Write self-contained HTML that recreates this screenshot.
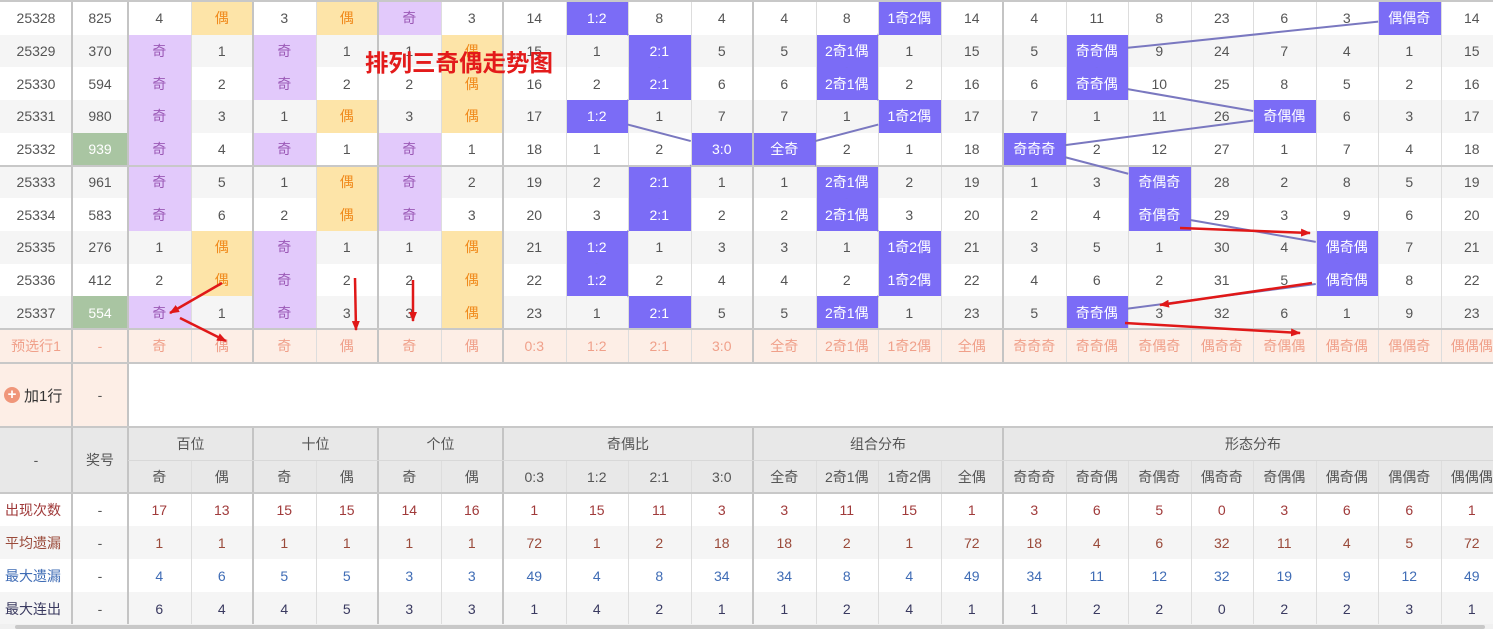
<!DOCTYPE html>
<html><head><meta charset="utf-8">
<style>
body{margin:0;width:1493px;height:629px;overflow:hidden;background:#fff;font-family:"Liberation Sans","Noto Sans CJK SC",sans-serif;font-size:14px;color:#555;position:relative}
.c{position:absolute;display:flex;align-items:center;justify-content:center;box-sizing:border-box;white-space:nowrap}
.v{position:absolute;top:0;width:1px;background:#ddd}
.vt{width:2px;background:#c4c4c4}
.h{position:absolute;left:0;width:1493px;height:2px;background:#c8c8c8}
svg{position:absolute;left:0;top:0}
</style></head><body>
<div id="root"></div>
<script>
var R=document.getElementById('root');
function el(x,y,w,h,txt,st){var d=document.createElement('div');d.className='c';d.style.cssText='left:'+x+'px;top:'+y+'px;width:'+w+'px;height:'+h+'px;'+(st||'');d.textContent=txt;R.appendChild(d);return d;}
var X=[0,72,128];for(var k=1;k<=23;k++)X.push(128+62.5*k);
function cx(i){return (X[i]+X[i+1])/2}
var RH=32.7,Y0=2;
var rows=[
['25328','825','4','偶','3','偶','奇','3','14','#1:2','8','4','4','8','#1奇2偶','14','4','11','8','23','6','3','#偶偶奇','14'],
['25329','370','奇','1','奇','1','1','偶','15','1','#2:1','5','5','#2奇1偶','1','15','5','#奇奇偶','9','24','7','4','1','15'],
['25330','594','奇','2','奇','2','2','偶','16','2','#2:1','6','6','#2奇1偶','2','16','6','#奇奇偶','10','25','8','5','2','16'],
['25331','980','奇','3','1','偶','3','偶','17','#1:2','1','7','7','1','#1奇2偶','17','7','1','11','26','#奇偶偶','6','3','17'],
['25332','*939','奇','4','奇','1','奇','1','18','1','2','#3:0','#全奇','2','1','18','#奇奇奇','2','12','27','1','7','4','18'],
['25333','961','奇','5','1','偶','奇','2','19','2','#2:1','1','1','#2奇1偶','2','19','1','3','#奇偶奇','28','2','8','5','19'],
['25334','583','奇','6','2','偶','奇','3','20','3','#2:1','2','2','#2奇1偶','3','20','2','4','#奇偶奇','29','3','9','6','20'],
['25335','276','1','偶','奇','1','1','偶','21','#1:2','1','3','3','1','#1奇2偶','21','3','5','1','30','4','#偶奇偶','7','21'],
['25336','412','2','偶','奇','2','2','偶','22','#1:2','2','4','4','2','#1奇2偶','22','4','6','2','31','5','#偶奇偶','8','22'],
['25337','*554','奇','1','奇','3','3','偶','23','1','#2:1','5','5','#2奇1偶','1','23','5','#奇奇偶','3','32','6','1','9','23']];
var boxes=[[],[],[]];
rows.forEach(function(r,i){
 var y=Y0+RH*i;var bg=i%2?'#f5f5f5':'#fff';
 el(0,y,1493,RH,'','background:'+bg);
 r.forEach(function(t,j){
  var x=X[j],w=X[j+1]-X[j],st='';
  if(t[0]=='#'){t=t.slice(1);st='background:#7b6cf6;color:#fff;';var g=j<12?0:(j<16?1:2);boxes[g].push([cx(j),y+RH/2]);}
  else if(t[0]=='*'){t=t.slice(1);st='background:#a9c5a2;color:#fff;';}
  else if(j>=2&&j<8&&t=='奇')st='background:#e2c9fb;color:#9b59b6;';
  else if(j>=2&&j<8&&t=='偶')st='background:#fde4a8;color:#f08a1c;';
  el(x,y,w,RH,t,st);
 });
});
var py=Y0+RH*10;
el(0,py,1493,34,'','background:#fdeee6');
var pre=['预选行1','-','奇','偶','奇','偶','奇','偶','0:3','1:2','2:1','3:0','全奇','2奇1偶','1奇2偶','全偶','奇奇奇','奇奇偶','奇偶奇','偶奇奇','奇偶偶','偶奇偶','偶偶奇','偶偶偶'];
pre.forEach(function(t,j){el(X[j],py,X[j+1]-X[j],34,t,'color:#f0a08a');});
el(0,363,128,64,'','background:#fdeee6');
var a=el(0,363,72,64,'','justify-content:flex-start;padding-left:4px;color:#333;font-size:15px');
a.innerHTML='<span style="display:inline-block;width:16px;height:16px;border-radius:50%;background:#f0967a;color:#fff;font-size:15px;line-height:16px;text-align:center;margin-right:4px;font-weight:bold">+</span>加1行';
el(72,363,56,64,'-');
el(0,427,1493,66,'','background:#e8e8e8');
el(0,427,72,66,'-');el(72,427,56,66,'奖号');
for(var j=2;j<24;j++)el(X[j],460,X[j+1]-X[j],33,pre[j]);
var st=[['出现次数','#a03a3a',['17','13','15','15','14','16','1','15','11','3','3','11','15','1','3','6','5','0','3','6','6','1']],
['平均遗漏','#9a4a3a',['1','1','1','1','1','1','72','1','2','18','18','2','1','72','18','4','6','32','11','4','5','72']],
['最大遗漏','#3f6cb5',['4','6','5','5','3','3','49','4','8','34','34','8','4','49','34','11','12','32','19','9','12','49']],
['最大连出','#3a3a60',['6','4','4','5','3','3','1','4','2','1','1','2','4','1','1','2','2','0','2','2','3','1']]];
st.forEach(function(s,i){var y=493+33*i;el(0,y,1493,33,'',i%2?'background:#f5f5f5':'');
 el(0,y,72,33,s[0],'color:'+s[1]+';justify-content:flex-start;padding-left:5px');el(72,y,56,33,'-');
 s[2].forEach(function(t,j){el(X[j+2],y,62.5,33,t,'color:'+s[1]);});});
var thick=[72,128,253,378,503,753,1003];
X.forEach(function(x,i){if(i==0)return;var d=document.createElement('div');var t=thick.indexOf(x)>=0;d.className='v'+(t?' vt':'');d.style.left=(t?x-1:x)+'px';d.style.height='625px';R.appendChild(d);});
el(129,364,1364,62,'','background:#fff');
// group header cells covering thin lines
var grp=[['百位',128,253],['十位',253,378],['个位',378,503],['奇偶比',503,753],['组合分布',753,1003],['形态分布',1003,1503]];
grp.forEach(function(g){el(g[1]+1,428,g[2]-g[1]-2,32,g[0],'background:#e8e8e8');});
el(128,460,1375,1,'','background:#d8d8d8');
[0,165,328,362,426,492].forEach(function(y){var d=document.createElement('div');d.className='h';d.style.top=y+'px';R.appendChild(d);});
el(0,624,1493,5,'','background:#f0f0f0');el(15,625,1470,4,'','background:#c8c8c8;border-radius:2px');
var s='<svg width="1493" height="629">';
function clip(a,b){var dx=b[0]-a[0],dy=b[1]-a[1];var t=Math.min(Math.abs(dx)>0?31/Math.abs(dx):9,Math.abs(dy)>0?16.3/Math.abs(dy):9);return [a[0]+dx*t,a[1]+dy*t];}
boxes.forEach(function(bs){for(var i=0;i<bs.length-1;i++){var p=clip(bs[i],bs[i+1]),q=clip(bs[i+1],bs[i]);s+='<line x1="'+p[0]+'" y1="'+p[1]+'" x2="'+q[0]+'" y2="'+q[1]+'" stroke="#7a78c0" stroke-width="2"/>';}});
s+='<defs><marker id="m" markerWidth="10" markerHeight="8" refX="9" refY="4" orient="auto" markerUnits="userSpaceOnUse"><path d="M0,0 L10,4 L0,8 Z" fill="#e01818"/></marker></defs>';
[[222,283,170,313],[180,318,226,341],[355,278,356,330],[413,280,413,321],[1180,228,1310,233],[1312,283,1160,305],[1125,323,1300,333]].forEach(function(a){s+='<line x1="'+a[0]+'" y1="'+a[1]+'" x2="'+a[2]+'" y2="'+a[3]+'" stroke="#e01818" stroke-width="2.5" marker-end="url(#m)"/>';});
s+='<text x="365" y="71" font-size="23.5" font-weight="bold" fill="#e31b1b" font-family="Liberation Sans,Noto Sans CJK SC,sans-serif">排列三奇偶走势图</text></svg>';
R.insertAdjacentHTML('beforeend',s);
</script>
</body></html>
